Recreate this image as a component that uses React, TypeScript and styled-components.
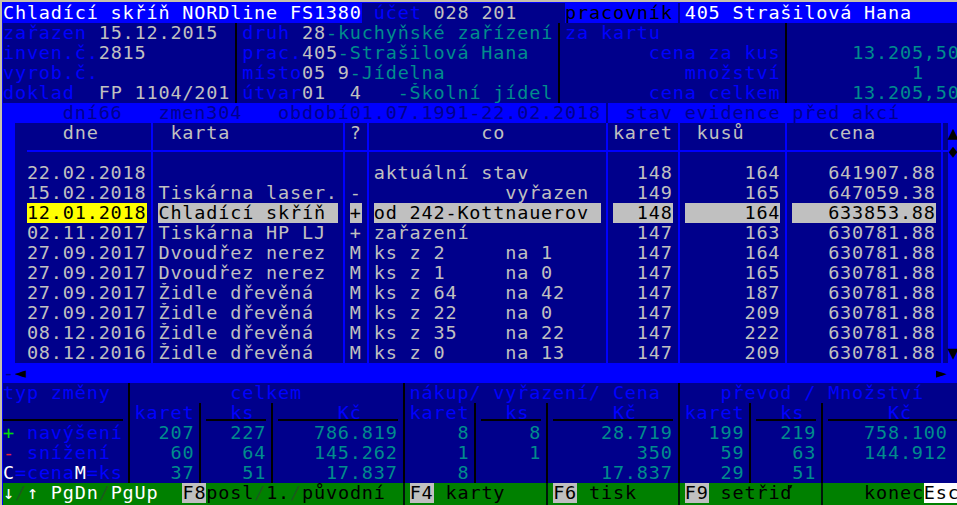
import { Fragment } from "react";
import styled, { createGlobalStyle } from "styled-components";

// one text-mode cell
const CW = 11.96;
const w = (n: number) => `${(n * CW).toFixed(2)}px`;

const C = {
  navy: "#00008b",
  blue: "#0000ff",
  grey: "#c0c0c0",
  teal: "#008c8c",
  white: "#ffffff",
  black: "#000000",
  yellow: "#ffff00",
  green: "#008000",
  lime: "#00e000",
  red: "#e8203c",
  slash: "#1d5a1d",
  frame: "#c8c0ac",
};

const GlobalStyle = createGlobalStyle`
  html, body {
    margin: 0;
    padding: 0;
    overflow: hidden;
    background: #000;
  }
`;

const Screen = styled.div`
  width: ${w(80)};
  border-top: 2px solid ${C.frame};
  border-left: 2px solid ${C.frame};
  padding: 1px 0 0 1px;
  background: ${C.blue};
  font-family: "DejaVu Sans Mono", "Liberation Mono", monospace;
  font-size: 18.5px;
  letter-spacing: 0.82px;
  line-height: 20px;
  white-space: pre;
`;

const Line = styled.div<{ $bg?: string; $fg?: string; $h?: number }>`
  display: flex;
  height: ${(p) => p.$h ?? 20}px;
  background: ${(p) => p.$bg ?? C.navy};
  color: ${(p) => p.$fg ?? C.grey};
`;

const Seg = styled.span<{ $w: number; $fg?: string; $bg?: string; $right?: boolean; $center?: boolean; $padR?: number; $rule?: boolean }>`
  flex: none;
  box-sizing: border-box;
  width: ${(p) => w(p.$w)};
  padding-right: ${(p) => w(p.$padR ?? 0)};
  overflow: hidden;
  color: ${(p) => p.$fg ?? "inherit"};
  background-color: ${(p) => p.$bg ?? "transparent"};
  background-image: ${(p) =>
    p.$rule ? `linear-gradient(${C.black}, ${C.black})` : "none"};
  background-repeat: no-repeat;
  background-size: 100% 2px;
  background-position: 0 16px;
  text-align: ${(p) => (p.$right ? "right" : p.$center ? "center" : "left")};
`;

const Sep = styled.span<{ $line?: string; $bg?: string }>`
  flex: none;
  width: ${w(1)};
  background-color: ${(p) => p.$bg ?? "transparent"};
  background-image: linear-gradient(${(p) => p.$line ?? C.black}, ${(p) => p.$line ?? C.black});
  background-repeat: no-repeat;
  background-size: 2px 100%;
  background-position: center;
`;

const Lbl = styled.span`
  color: ${C.blue};
`;
const Val = styled.span`
  color: ${C.grey};
`;
const Txt = styled.span`
  color: ${C.teal};
`;
const Hot = styled.span<{ $c: string }>`
  color: ${(p) => p.$c};
`;

// table
const TableArea = styled.div`
  display: flex;
  height: 240px;
  padding-left: ${w(1)};
  background: ${C.blue};
`;

const Col = styled.div<{ $w: number; $pad?: number }>`
  flex: none;
  display: flex;
  flex-direction: column;
  width: ${(p) => w(p.$w)};
  padding-left: ${(p) => w(p.$pad ?? 0)};
  background: ${C.navy};
  color: ${C.grey};
`;

const Head = styled.div`
  height: 27px;
  border-bottom: 2px solid ${C.blue};
`;

const Body = styled.div`
  padding-top: 11px;
`;

const Cell = styled.div<{ $hl?: string; $right?: boolean }>`
  height: 20px;
  overflow: hidden;
  text-align: ${(p) => (p.$right ? "right" : "left")};
  color: ${(p) => (p.$hl ? C.black : C.grey)};
  background: ${(p) => p.$hl ?? "transparent"};
`;

const ColSep = styled.div`
  flex: none;
  width: ${w(1)};
  background-color: ${C.navy};
  background-image: linear-gradient(${C.blue}, ${C.blue}), linear-gradient(${C.blue}, ${C.blue});
  background-repeat: no-repeat;
  background-size: 2px 100%, 100% 2px;
  background-position: center top, 0 27px;
`;

const ScrollTrack = styled.div`
  flex: none;
  display: flex;
  flex-direction: column;
  width: ${w(1)};
  color: ${C.black};
`;

const Arrow = styled.div<{ $end?: boolean }>`
  height: 20px;
  text-align: center;
  margin-top: ${(p) => (p.$end ? "auto" : "0")};
`;

const Key = styled.span<{ $bg?: string }>`
  color: ${C.black};
  background: ${(p) => p.$bg ?? C.grey};
`;

type Row = {
  date: string;
  card: string;
  flag: string;
  what: string;
  cards: string;
  pcs: string;
  price: string;
  hl?: boolean;
};

const rows: Row[] = [
  { date: "22.02.2018", card: "", flag: "", what: "aktuální stav", cards: "148", pcs: "164", price: "641907.88" },
  { date: "15.02.2018", card: "Tiskárna laser.", flag: "-", what: "           vyřazen", cards: "149", pcs: "165", price: "647059.38" },
  { date: "12.01.2018", card: "Chladící skříň", flag: "+", what: "od 242-Kottnauerov", cards: "148", pcs: "164", price: "633853.88", hl: true },
  { date: "02.11.2017", card: "Tiskárna HP LJ", flag: "+", what: "zařazení", cards: "147", pcs: "163", price: "630781.88" },
  { date: "27.09.2017", card: "Dvoudřez nerez", flag: "M", what: "ks z 2     na 1", cards: "147", pcs: "164", price: "630781.88" },
  { date: "27.09.2017", card: "Dvoudřez nerez", flag: "M", what: "ks z 1     na 0", cards: "147", pcs: "165", price: "630781.88" },
  { date: "27.09.2017", card: "Židle dřevěná", flag: "M", what: "ks z 64    na 42", cards: "147", pcs: "187", price: "630781.88" },
  { date: "27.09.2017", card: "Židle dřevěná", flag: "M", what: "ks z 22    na 0", cards: "147", pcs: "209", price: "630781.88" },
  { date: "08.12.2016", card: "Židle dřevěná", flag: "M", what: "ks z 35    na 22", cards: "147", pcs: "222", price: "630781.88" },
  { date: "08.12.2016", card: "Židle dřevěná", flag: "M", what: "ks z 0     na 13", cards: "147", pcs: "209", price: "630781.88" },
];

const columns: { key: keyof Row; w: number; pad?: number; head: string; right?: boolean; hl?: string }[] = [
  { key: "date", w: 10, pad: 1, head: "   dne", hl: C.yellow },
  { key: "card", w: 15, head: " karta" },
  { key: "flag", w: 1, head: "?" },
  { key: "what", w: 19, head: "         co" },
  { key: "cards", w: 5, head: "karet", right: true },
  { key: "pcs", w: 8, head: " kusů", right: true },
  { key: "price", w: 12, head: "   cena", right: true },
];

const totals = [
  { label: <><Hot $c={C.lime}>+</Hot><Lbl> navýšení</Lbl></>, v: ["207", "227", "786.819", "8", "8", "28.719", "199", "219", "758.100"] },
  { label: <><Hot $c={C.red}>-</Hot><Lbl> snížení</Lbl></>, v: ["60", "64", "145.262", "1", "1", "350", "59", "63", "144.912"] },
  { label: <><Hot $c={C.white}>C</Hot><Lbl>=cena</Lbl><Hot $c={C.white}>M</Hot><Lbl>=ks</Lbl></>, v: ["37", "51", "17.837", "8", "", "17.837", "29", "51", ""] },
];

const groupWidths = [5, 5, 10];

export default function App() {
  return (
    <>
      <GlobalStyle />
      <Screen>
        {/* title line */}
        <Line>
          <Seg $w={30} $bg={C.blue} $fg={C.white}>Chladící skříň NORDline FS1380</Seg>
          <Seg $w={17}> <Lbl>účet</Lbl> <Val>028 201</Val></Seg>
          <Seg $w={9} $bg={C.blue} $fg={C.black}>pracovník</Seg>
          <Sep $bg={C.blue} $line={C.navy} />
          <Seg $w={23} $bg={C.blue} $fg={C.white}>405 Strašilová Hana</Seg>
        </Line>

        {/* card info */}
        <Line>
          <Seg $w={19}><Lbl>zařazen</Lbl> <Val>15.12.2015</Val></Seg>
          <Sep />
          <Seg $w={26}><Lbl>druh</Lbl> <Val>28</Val><Txt>-kuchyňské zařízení</Txt></Seg>
          <Sep />
          <Seg $w={18}><Lbl>za kartu</Lbl></Seg>
          <Sep />
          <Seg $w={14} />
        </Line>
        <Line>
          <Seg $w={19}><Lbl>inven.č.</Lbl><Val>2815</Val></Seg>
          <Sep />
          <Seg $w={26}><Lbl>prac.</Lbl><Val>405</Val><Txt>-Strašilová Hana</Txt></Seg>
          <Sep />
          <Seg $w={18} $right $fg={C.blue}>cena za kus</Seg>
          <Sep />
          <Seg $w={14} $right $fg={C.teal}>13.205,50</Seg>
        </Line>
        <Line>
          <Seg $w={19}><Lbl>vyrob.č.</Lbl></Seg>
          <Sep />
          <Seg $w={26}><Lbl>místo</Lbl><Val>05 9</Val><Txt>-Jídelna</Txt></Seg>
          <Sep />
          <Seg $w={18} $right $fg={C.blue}>množství</Seg>
          <Sep />
          <Seg $w={14} $right $padR={3} $fg={C.teal}>1</Seg>
        </Line>
        <Line>
          <Seg $w={19}><Lbl>doklad</Lbl>  <Val>FP 1104/201</Val></Seg>
          <Sep />
          <Seg $w={26}><Lbl>útvar</Lbl><Val>01  4</Val>   <Txt>-Školní jídel</Txt></Seg>
          <Sep />
          <Seg $w={18} $right $fg={C.blue}>cena celkem</Seg>
          <Sep />
          <Seg $w={14} $right $fg={C.teal}>13.205,50</Seg>
        </Line>

        {/* period bar */}
        <Line $bg={C.blue} $fg={C.navy}>
          <Seg $w={50}>     dní66   zmen304   období01.07.1991-22.02.2018</Seg>
          <Sep $line={C.navy} />
          <Seg $w={29}> stav evidence před akcí</Seg>
        </Line>

        <TableArea>
          {columns.map((c) => (
            <Fragment key={c.key}>
              <Col $w={c.w} $pad={c.pad}>
                <Head>{c.head}</Head>
                <Body>
                  {rows.map((r, j) => (
                    <Cell key={j} $right={c.right} $hl={r.hl ? c.hl ?? C.grey : undefined}>
                      {r[c.key] as string}
                    </Cell>
                  ))}
                </Body>
              </Col>
              <ColSep />
            </Fragment>
          ))}
          <ScrollTrack>
            <Arrow>▲</Arrow>
            <Arrow>♦</Arrow>
            <Arrow $end>▼</Arrow>
          </ScrollTrack>
        </TableArea>

        <Line $bg={C.blue} $fg={C.black}>
          <Seg $w={1} $fg={C.navy}>-</Seg>
          <Seg $w={1}>◄</Seg>
          <Seg $w={76} />
          <Seg $w={1}>►</Seg>
          <Seg $w={1} />
        </Line>

        {/* totals */}
        <Line $fg={C.blue}>
          <Seg $w={10}>typ změny</Seg>
          <Sep />
          <Seg $w={22} $center>celkem</Seg>
          <Sep />
          <Seg $w={22}>nákup/ vyřazení/ Cena</Seg>
          <Sep />
          <Seg $w={23} $center>převod / Množství</Seg>
        </Line>
        <Line $fg={C.blue}>
          <Seg $w={10} $rule />
          {[0, 1, 2].map((g) => (
            <Fragment key={g}>
              <Sep />
              <Seg $w={5}>karet</Seg>
              <Sep />
              <Seg $w={5} $rule>  ks</Seg>
              <Sep />
              <Seg $w={g === 2 ? 11 : 10} $rule>     Kč</Seg>
            </Fragment>
          ))}
        </Line>
        {totals.map((t, i) => (
          <Line key={i} $fg={C.teal}>
            <Seg $w={10}>{t.label}</Seg>
            {t.v.map((v, k) => (
              <Fragment key={k}>
                <Sep />
                <Seg
                  $w={k === 8 ? 11 : groupWidths[k % 3]}
                  $padR={k === 8 ? 1 : 0}
                  $right
                >
                  {v}
                </Seg>
              </Fragment>
            ))}
          </Line>
        ))}

        {/* status bar */}
        <Line $bg={C.green} $fg={C.black} $h={22}>
          <Seg $w={33}>
            <Hot $c={C.white}>↓</Hot><Hot $c={C.slash}>/</Hot><Hot $c={C.white}>↑ PgDn</Hot>
            <Hot $c={C.slash}>/</Hot><Hot $c={C.white}>PgUp</Hot>  <Key>F8</Key>posl
            <Hot $c={C.slash}>/</Hot>1.<Hot $c={C.slash}>/</Hot>původní
          </Seg>
          <Sep $line="#00180a" />
          <Seg $w={11}><Key>F4</Key> karty</Seg>
          <Sep $line="#00180a" />
          <Seg $w={10}><Key>F6</Key> tisk</Seg>
          <Sep $line="#00180a" />
          <Seg $w={11}><Key>F9</Key> setřiď</Seg>
          <Sep $line="#00180a" />
          <Seg $w={11}>   konec<Key $bg={C.white}>Esc</Key></Seg>
        </Line>
      </Screen>
    </>
  );
}
